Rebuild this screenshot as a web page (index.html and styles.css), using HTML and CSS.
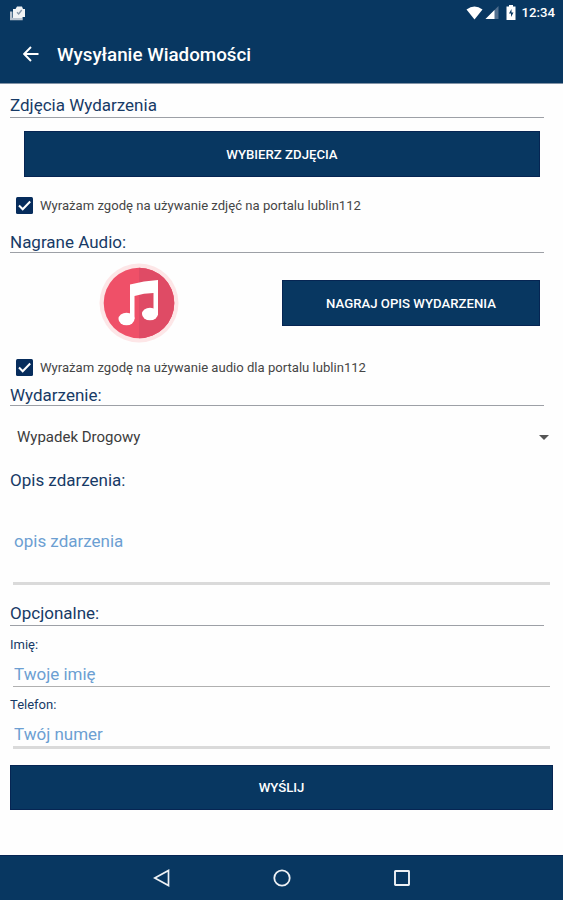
FILE: index.html
```html
<!DOCTYPE html>
<html lang="pl">
<head>
	<title>Wysyłanie Wiadomości</title>
	<meta charset="utf-8">
	<meta name="viewport" content="width=device-width, initial-scale=1">
	<link rel="stylesheet" href="styles.css">
</head>
<body>

	<header>
		<!-- status bar -->
		<div class="status">
			<svg class="photos" width="16" height="16" viewBox="0 0 16 16">
				<path d="M1.200 6.500v7.500h11.500" fill="none" stroke="#b9c3cf" stroke-width="2.400"/>
				<path d="M3 4h2.500l1.500-2.500h5l1 2.500h2v8h-2l-1 1H3z" fill="#f1f3f5"/>
				<path d="M7 7.200l1.700 1.800 3-4" fill="none" stroke="#8495a8" stroke-width="1.300"/>
			</svg>
			<svg class="wifi" width="17" height="14" viewBox="0 0 17 14">
				<path d="M8.500 13.500L.5 3.500q8-6 16 0z" fill="#fff"/>
			</svg>
			<svg class="signal" width="14" height="13" viewBox="0 0 14 13">
				<path d="M13.500 0v13H.5z" fill="#52708f"/>
				<path d="M9.500 4v9H.5z" fill="#fff"/>
			</svg>
			<svg class="battery" width="10" height="15" viewBox="0 0 10 15">
				<path d="M3 0h4v1.500h2.500V15H.5V1.500H3z" fill="#fff"/>
				<path d="M5.500 4L3 8.500h2V12l2.500-4.500h-2z" fill="#083761"/>
			</svg>
			<span class="clock">12:34</span>
		</div>
		<div class="toolbar">
			<svg width="16" height="16" viewBox="0 0 16 16">
				<path d="M15.500 8H1.500M8 1L1.200 8 8 15" fill="none" stroke="#fff" stroke-width="1.900"/>
			</svg>
			<h1>Wysyłanie Wiadomości</h1>
		</div>
	</header>

	<main>
		<!-- photos -->
		<h2>Zdjęcia Wydarzenia</h2>
		<button class="btn photo-btn">WYBIERZ ZDJĘCIA</button>
		<label class="agree">
			<svg width="17" height="17" viewBox="0 0 17 17">
				<rect width="17" height="17" rx="1.500" fill="#062c5c"/>
				<path d="M3 8.500l3.700 3.800L14.200 4.500" fill="none" stroke="#fff" stroke-width="2"/>
			</svg>
			<span class="agree-photo">Wyrażam zgodę na używanie zdjęć na portalu lublin112</span>
		</label>

		<!-- audio -->
		<h2 class="audio-title">Nagrane Audio:</h2>
		<div class="audio">
			<svg width="80" height="80" viewBox="0 0 80 80">
				<circle cx="40" cy="40" r="39.500" fill="#fde6e7"/>
				<circle cx="40" cy="40" r="35.300" fill="#ef5068"/>
				<path d="M40 4.700a35.300 35.300 0 0 1 0 70.600z" fill="#df4b65"/>
				<path d="M31 21.500q14-4 28-4.500v35h-4.500V30q-9.500 0-19 3v23H31z" fill="#fff"/>
				<ellipse cx="27.500" cy="56" rx="8" ry="6.300" fill="#fff"/>
				<ellipse cx="51" cy="51" rx="8" ry="6.300" fill="#fff"/>
			</svg>
			<button class="btn record-btn">NAGRAJ OPIS WYDARZENIA</button>
		</div>
		<label class="agree">
			<svg width="17" height="17" viewBox="0 0 17 17">
				<rect width="17" height="17" rx="1.500" fill="#062c5c"/>
				<path d="M3 8.500l3.700 3.800L14.200 4.500" fill="none" stroke="#fff" stroke-width="2"/>
			</svg>
			<span class="agree-audio">Wyrażam zgodę na używanie audio dla portalu lublin112</span>
		</label>

		<!-- event -->
		<h2 class="event-title">Wydarzenie:</h2>
		<div class="spinner">
			<span>Wypadek Drogowy</span>
			<svg width="10" height="5" viewBox="0 0 10 5"><path d="M0 0h10L5 5z" fill="#555"/></svg>
		</div>
		<h2 class="plain">Opis zdarzenia:</h2>
		<textarea class="desc" placeholder="opis zdarzenia"></textarea>

		<!-- contact -->
		<h2 class="optional-title">Opcjonalne:</h2>
		<label class="small" for="name">Imię:</label>
		<input id="name" type="text" placeholder="Twoje imię">
		<label class="small phone-label" for="phone">Telefon:</label>
		<input id="phone" class="phone" type="text" placeholder="Twój numer">
		<button class="btn send-btn">WYŚLIJ</button>
	</main>

	<!-- navigation bar -->
	<footer>
		<svg width="18" height="18" viewBox="0 0 18 18"><path d="M1.800 9L15.500 1.500v15z" fill="none" stroke="#eef1f5" stroke-width="1.700"/></svg>
		<svg width="18" height="18" viewBox="0 0 18 18"><circle cx="9" cy="9" r="7.700" fill="none" stroke="#eef1f5" stroke-width="1.800"/></svg>
		<svg width="18" height="18" viewBox="0 0 18 18"><rect x="2" y="2" width="14" height="14" rx="0.500" fill="none" stroke="#eef1f5" stroke-width="1.900"/></svg>
	</footer>

</body>
</html>
```
FILE: styles.css
```css
* {
	box-sizing: border-box;
}
body {
	margin: 0;
	height: 900px;
	display: flex;
	flex-direction: column;
	background-color: #fefefe;
	font-family: Roboto, sans-serif;
	overflow: hidden;
}
svg {
	display: block;
	flex: none;
}
header {
	height: 84px;
	background-color: #083761;
	border-bottom: 1px solid #8293a6;
	color: white;
}
.status {
	height: 25px;
	padding: 0 8px 0 10px;
	display: flex;
	align-items: center;
}
.photos {
	margin-right: auto;
}
.wifi {
	margin-right: 1px;
}
.signal {
	margin-left: 1px;
}
.battery {
	margin: 0 6px 0 7px;
}
.clock {
	font-size: 13.2px;
	font-weight: 500;
}
.toolbar {
	height: 58px;
	padding-left: 23px;
	display: flex;
	align-items: center;
}
h1 {
	margin: 1px 0 0 18px;
	font-size: 18.8px;
	font-weight: 500;
}
main {
	flex: 1;
	padding: 10px 10px 0;
	display: flex;
	flex-direction: column;
}
h2 {
	height: 24px;
	margin: 0 9px 0 0;
	border-bottom: 1px solid #9da0a6;
	color: #173a66;
	font-size: 17px;
	font-weight: 400;
	line-height: 23px;
	white-space: nowrap;
}
.btn {
	height: 46px;
	padding: 0;
	border: 1px solid #062553;
	background-color: #083761;
	color: white;
	font-family: Roboto, sans-serif;
	font-size: 13.2px;
	font-weight: 500;
}
.photo-btn {
	margin: 13px 13px 0 14px;
}
.agree {
	height: 17px;
	margin: 20px 0 0 6px;
	display: flex;
	align-items: center;
	gap: 7px;
	color: #454545;
	font-size: 13.1px;
	white-space: nowrap;
}
.audio-title {
	margin-top: 15px;
	line-height: 27px;
}
.audio {
	height: 80px;
	margin: 10px 13px 0 89px;
	display: flex;
	align-items: center;
	justify-content: space-between;
}
.record-btn {
	width: 258px;
}
.audio + .agree {
	margin-top: 16px;
}
.event-title {
	margin-top: 6px;
	line-height: 27px;
}
.spinner {
	height: 62px;
	padding: 0 4px 0 7px;
	display: flex;
	align-items: center;
	justify-content: space-between;
	color: #3c3c3c;
	font-size: 15px;
}
.plain {
	border: none;
	line-height: 24px;
}
textarea,
input {
	display: block;
	margin: 0 3px;
	padding: 0 1px;
	border: none;
	border-bottom: 1px solid #b0b0b0;
	border-radius: 0;
	background: none;
	font-family: Roboto, sans-serif;
	font-size: 17px;
	resize: none;
	outline: none;
}
::placeholder {
	color: #6c9fd2;
	opacity: 1;
}
.desc {
	height: 93px;
	padding-top: 38px;
	border-bottom: 3px solid #dadada;
	line-height: 22px;
	overflow: hidden;
}
.optional-title {
	margin-top: 17px;
}
.small {
	height: 16px;
	margin-top: 11px;
	color: #173a66;
	font-size: 13px;
	line-height: 16px;
}
input {
	height: 34px;
	padding-top: 9px;
}
.phone-label {
	margin-top: 10px;
}
.phone {
	height: 36px;
	padding-top: 9px;
	border-bottom: 3px solid #dadada;
}
.send-btn {
	height: 45px;
	margin-top: 16px;
}
footer {
	height: 45px;
	background-color: #083761;
	border-top: 1px solid #062553;
	display: flex;
	align-items: center;
	justify-content: center;
	gap: 102px;
}
```
